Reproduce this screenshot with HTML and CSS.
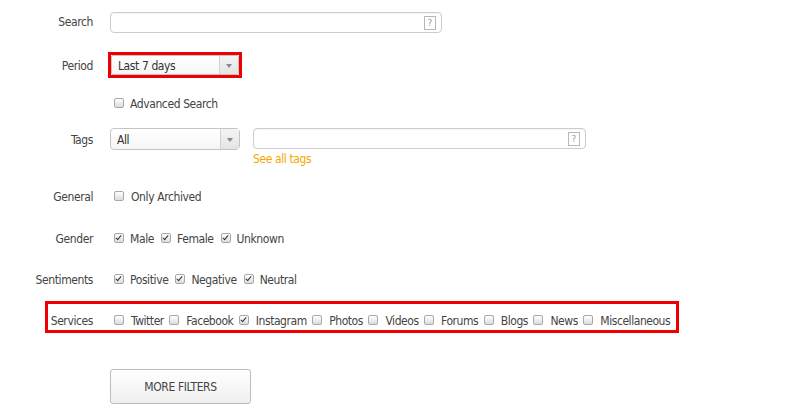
FILE: index.html
```html
<!DOCTYPE html>
<html>
<head>
<meta charset="utf-8">
<link rel="stylesheet" href="styles.css">
</head>
<body>
<div class="form">
  <div class="row r-search">
    <div class="lbl">Search</div>
    <div class="field">
      <div class="input w-search"><span class="help">?</span></div>
    </div>
  </div>
  <div class="row r-period">
    <div class="lbl">Period</div>
    <div class="field">
      <div class="hl-box">
        <div class="select w-period"><span class="val">Last 7 days</span><span class="arrow"></span></div>
      </div>
    </div>
  </div>
  <div class="row r-adv">
    <div class="lbl"></div>
    <div class="field opts">
      <span class="cb"></span><span class="opt">Advanced Search</span>
    </div>
  </div>
  <div class="row r-tags">
    <div class="lbl">Tags</div>
    <div class="field tags">
      <div class="select w-tags"><span class="val">All</span><span class="arrow"></span></div>
      <div class="tagcol">
        <div class="input w-taginput"><span class="help">?</span></div>
        <a class="link">See all tags</a>
      </div>
    </div>
  </div>
  <div class="row r-general">
    <div class="lbl">General</div>
    <div class="field opts">
      <span class="cb"></span><span class="opt wide">Only Archived</span>
    </div>
  </div>
  <div class="row r-gender">
    <div class="lbl">Gender</div>
    <div class="field opts">
      <span class="cb on"></span><span class="opt">Male</span>
      <span class="cb on"></span><span class="opt">Female</span>
      <span class="cb on"></span><span class="opt">Unknown</span>
    </div>
  </div>
  <div class="row r-sent">
    <div class="lbl">Sentiments</div>
    <div class="field opts">
      <span class="cb on"></span><span class="opt">Positive</span>
      <span class="cb on"></span><span class="opt">Negative</span>
      <span class="cb on"></span><span class="opt">Neutral</span>
    </div>
  </div>
  <div class="row r-services">
    <div class="lbl">Services</div>
    <div class="field opts">
      <span class="cb"></span><span class="opt">Twitter</span>
      <span class="cb"></span><span class="opt">Facebook</span>
      <span class="cb on"></span><span class="opt">Instagram</span>
      <span class="cb"></span><span class="opt">Photos</span>
      <span class="cb"></span><span class="opt">Videos</span>
      <span class="cb"></span><span class="opt">Forums</span>
      <span class="cb"></span><span class="opt">Blogs</span>
      <span class="cb"></span><span class="opt">News</span>
      <span class="cb"></span><span class="opt">Miscellaneous</span>
    </div>
  </div>
  <div class="row r-btn">
    <div class="lbl"></div>
    <div class="field">
      <button class="btn">MORE FILTERS</button>
    </div>
  </div>
</div>
</body>
</html>
```

FILE: styles.css
```css
html, body {
  margin: 0;
  padding: 0;
  background: #ffffff;
}
body {
  font-family: "Liberation Sans Narrow", "DejaVu Sans Condensed", "Liberation Sans", sans-serif;
  font-size: 12px;
  letter-spacing: -0.4px;
  color: #444444;
  width: 800px;
  height: 415px;
  overflow: hidden;
}
.form {
  display: flex;
  flex-direction: column;
}
.row {
  display: flex;
  align-items: center;
}
.lbl {
  width: 93px;
  flex: 0 0 93px;
  text-align: right;
  color: #444;
  padding-top: 2px;
}
.field {
  margin-left: 17px;
  display: flex;
  align-items: center;
}
.r-search { margin-top: 12px; height: 21px; }
.r-search .lbl { padding-top: 0; margin-top: -1px; }
.r-period { margin-top: 20px; height: 24px; }
.r-adv { margin-top: 18px; height: 16px; }
.r-tags { margin-top: 17px; align-items: flex-start; }
.r-tags .lbl { line-height: 22px; padding-top: 1px; }
.r-general { margin-top: 22px; height: 16px; }
.r-gender { margin-top: 26px; height: 16px; }
.r-sent { margin-top: 25px; height: 16px; }
.r-services {
  margin-top: 14px;
  margin-left: 45px;
  width: 628px;
  border: 3px solid #ee0000;
  padding-top: 5px;
  height: 21px;
}
.r-services .lbl {
  width: 45px;
  flex: 0 0 45px;
}
.r-btn { margin-top: 36px; }
.r-btn .lbl { padding-top: 0; }

.input {
  position: relative;
  height: 19px;
  border: 1px solid #cccccc;
  border-radius: 4px;
  background: #fff;
  box-shadow: inset 0 1px 1px rgba(0,0,0,0.04);
}
.w-search { width: 330px; }
.w-taginput { width: 331px; }
.help {
  position: absolute;
  right: 5px;
  top: 3px;
  width: 10px;
  height: 12px;
  border: 1px solid #b8b8b8;
  font-size: 9px;
  letter-spacing: 0;
  line-height: 12px;
  text-align: center;
  color: #999;
  font-family: "DejaVu Sans", sans-serif;
}
.hl-box {
  margin-left: -2px;
  border: 3px solid #ee0000;
  display: flex;
}
.select {
  display: flex;
  align-items: center;
  height: 18px;
  border: 1px solid #c4c4c4;
  background: linear-gradient(#ffffff, #f6f6f6);
  position: relative;
  border-radius: 2px;
}
.w-period { width: 126px; }
.w-tags {
  width: 128px;
  height: 20px;
  border-radius: 4px;
}
.select .val {
  flex: 1;
  padding-left: 6px;
  padding-top: 2px;
  color: #333;
}
.select .arrow {
  width: 18px;
  align-self: stretch;
  border-left: 1px solid #d2d2d2;
  background: linear-gradient(#f4f4f4, #e4e4e4);
  position: relative;
}
.select .arrow::after {
  content: "";
  position: absolute;
  left: 6px;
  top: 50%;
  margin-top: -1px;
  border-left: 3px solid transparent;
  border-right: 3px solid transparent;
  border-top: 4px solid #8a8a8a;
}
.tags { align-items: flex-start; }
.tagcol {
  margin-left: 13px;
  display: flex;
  flex-direction: column;
}
.link {
  margin-top: 3px;
  color: #f5a700;
  line-height: 14px;
  cursor: pointer;
}
.opts .cb {
  margin-left: 4px;
}
.cb {
  display: inline-block;
  position: relative;
  width: 8px;
  height: 8px;
  border: 1px solid #a8a8a8;
  border-radius: 2px;
  background: linear-gradient(#ffffff, #dcdcdc);
  flex: 0 0 8px;
}
.cb.on::after {
  content: "";
  position: absolute;
  left: 2px;
  top: 0px;
  width: 2px;
  height: 5px;
  border-right: 1.5px solid #333;
  border-bottom: 1.5px solid #333;
  transform: rotate(40deg);
}
.opt {
  margin-left: 6px;
  margin-right: 3px;
  padding-top: 2px;
  color: #444;
  white-space: nowrap;
}
.opt.wide { margin-left: 7px; }
.r-services .opt { margin-left: 7px; margin-right: 1.5px; letter-spacing: -0.45px; }
.btn {
  width: 141px;
  height: 35px;
  border: 1px solid #bdbdbd;
  border-radius: 3px;
  background: linear-gradient(#ffffff, #efefef);
  font-family: "Liberation Sans Narrow", "DejaVu Sans Condensed", "Liberation Sans", sans-serif;
  font-size: 12px;
  letter-spacing: -0.4px;
  color: #444;
  padding: 0;
  cursor: pointer;
}
```
